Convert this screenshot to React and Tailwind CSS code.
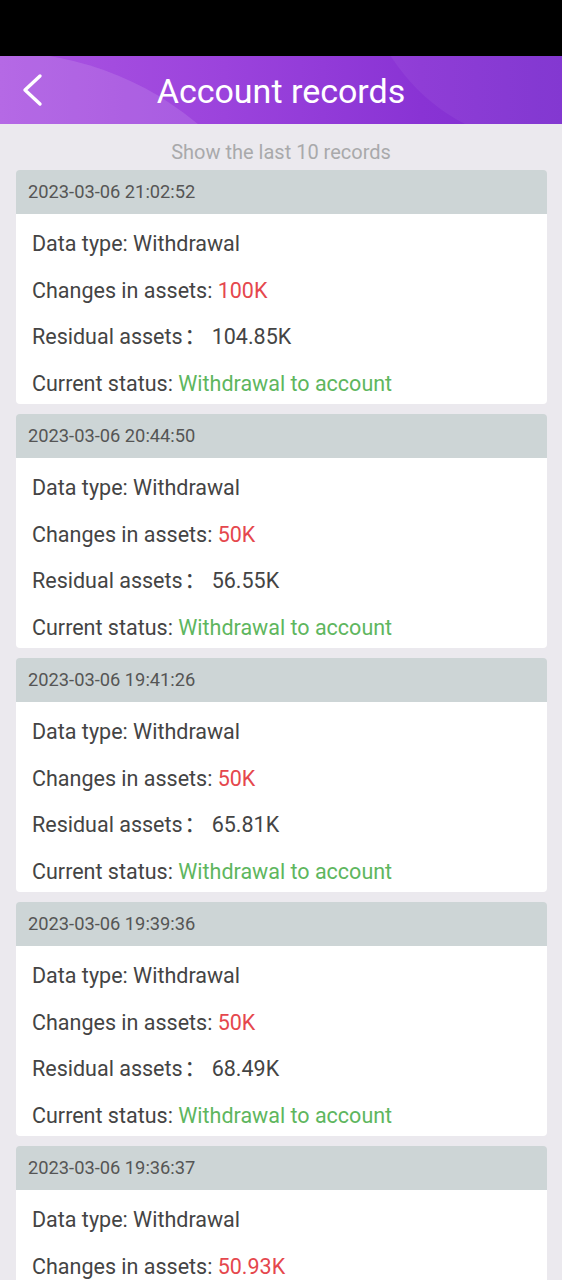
const records = [
  { time: '2023-03-06 21:02:52', change: '100K', residual: '104.85K' },
  { time: '2023-03-06 20:44:50', change: '50K', residual: '56.55K' },
  { time: '2023-03-06 19:41:26', change: '50K', residual: '65.81K' },
  { time: '2023-03-06 19:39:36', change: '50K', residual: '68.49K' },
  { time: '2023-03-06 19:36:37', change: '50.93K', residual: '54.12K' },
];

function RecordCard({ rec }) {
  return (
    <div className="rounded-[4px] overflow-hidden">
      <div className="h-[44px] bg-[#cdd5d6] flex items-center pl-[12px] text-[18.3px] text-[#555]">
        {rec.time}
      </div>
      <div className="bg-white h-[190px] pt-[7px] pl-[16px] text-[21.5px] text-[#444]">
        <div className="h-[46.5px] flex items-center">Data type: Withdrawal</div>
        <div className="h-[46.5px] flex items-center">
          Changes in assets:&nbsp;<span className="text-[#e5474d]">{rec.change}</span>
        </div>
        <div className="h-[46.5px] flex items-center">
          Residual assets
          <span className="inline-flex w-[12px] justify-center ml-[1px] mr-[16px] -mt-[2px] font-['Noto_Sans_CJK_KR',sans-serif]">
            ：
          </span>
          {rec.residual}
        </div>
        <div className="h-[46.5px] flex items-center">
          Current status:&nbsp;<span className="text-[#5eb65e]">Withdrawal to account</span>
        </div>
      </div>
    </div>
  );
}

export default function App() {
  return (
    <div className="w-[562px] h-[1280px] overflow-hidden bg-[#ebe9ee] font-['Roboto','Noto_Sans_CJK_SC',sans-serif]">
      <div className="h-[56px] bg-black" />
      <div className="relative h-[68px] bg-[linear-gradient(90deg,#ab55e2_0%,#9b43dc_40%,#8933d4_75%,#7c2ecf_100%)] overflow-hidden flex items-center justify-center">
        <div className="absolute -left-[308px] -top-[4px] w-[616px] h-[616px] rounded-full bg-white/12" />
        <div className="absolute left-[360px] -top-[300px] w-[700px] h-[390px] rounded-full bg-white/5" />
        <svg
          className="absolute left-[20px] top-[17px]"
          width="26"
          height="34"
          viewBox="0 0 26 34"
          fill="none"
          stroke="white"
          strokeWidth="3.4"
          strokeLinecap="round"
          strokeLinejoin="round"
        >
          <polyline points="20,3 5,17 20,31" />
        </svg>
        <h1 className="relative text-white text-[34px] mt-[2px]">Account records</h1>
      </div>
      <div className="h-[46px] pt-[10px] flex items-center justify-center text-[#a9a9ab] text-[20px]">
        Show the last 10 records
      </div>
      <div className="pl-[16px] pr-[15px] flex flex-col gap-[10px]">
        {records.map((r) => (
          <RecordCard key={r.time} rec={r} />
        ))}
      </div>
    </div>
  );
}
